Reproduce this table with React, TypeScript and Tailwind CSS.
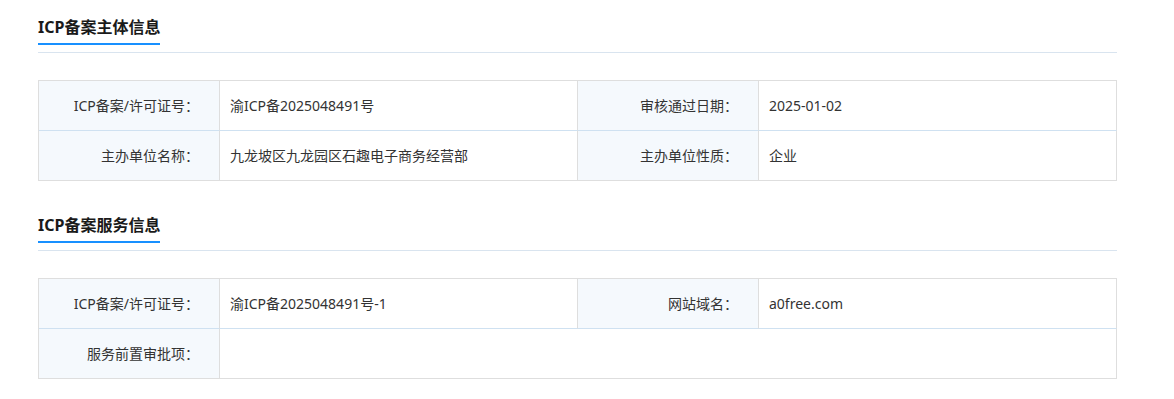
const font = { fontFamily: '"Noto Sans", "Noto Sans CJK SC", sans-serif' };

type Row = [string, string, string?, string?];

function SectionTitle({ title }: { title: string }) {
  return (
    <div className="flex border-b border-[#d9e4ef] pb-[7px]">
      <span className="border-b-2 border-[#1890ff] pb-[5px] text-[16px] leading-[22px] font-bold text-[#1a1a1a]">
        {title}
      </span>
    </div>
  );
}

function InfoTable({ rows }: { rows: Row[] }) {
  return (
    <div className="grid grid-cols-[181px_358px_181px_1fr] border-l border-t border-[#dedede] text-[14px] text-[#333]">
      {rows.map((r, i) => {
        const last = i === rows.length - 1;
        const rowBorder = last ? 'border-b-[#dedede]' : 'border-b-[#cfe1f1]';
        return r[2] !== undefined ? (
          <div key={i} className="contents">
            <div className={`flex h-[50px] items-center justify-end border-r border-b border-r-[#dedede] bg-[#f5f9fd] pr-[20px] ${rowBorder}`}>{r[0]}</div>
            <div className={`flex h-[50px] items-center border-r border-b border-r-[#dedede] pl-[10px] ${rowBorder}`}>{r[1]}</div>
            <div className={`flex h-[50px] items-center justify-end border-r border-b border-r-[#dedede] bg-[#f5f9fd] pr-[20px] ${rowBorder}`}>{r[2]}</div>
            <div className={`flex h-[50px] items-center border-r border-b border-r-[#dedede] pl-[10px] ${rowBorder}`}>{r[3]}</div>
          </div>
        ) : (
          <div key={i} className="contents">
            <div className={`flex h-[50px] items-center justify-end border-r border-b border-r-[#dedede] bg-[#f5f9fd] pr-[20px] ${rowBorder}`}>{r[0]}</div>
            <div className={`col-span-3 flex h-[50px] items-center border-r border-b border-r-[#dedede] pl-[10px] ${rowBorder}`}>{r[1]}</div>
          </div>
        );
      })}
    </div>
  );
}

export default function App() {
  return (
    <div className="min-h-[399px] w-[1174px] bg-white pl-[38px] pr-[57px] pt-[16px]" style={font}>
      <SectionTitle title="ICP备案主体信息" />
      <div className="mt-[27px]">
        <InfoTable
          rows={[
            ['ICP备案/许可证号：', '渝ICP备2025048491号', '审核通过日期：', '2025-01-02'],
            ['主办单位名称：', '九龙坡区九龙园区石趣电子商务经营部', '主办单位性质：', '企业'],
          ]}
        />
      </div>
      <div className="mt-[33px]">
        <SectionTitle title="ICP备案服务信息" />
      </div>
      <div className="mt-[27px]">
        <InfoTable
          rows={[
            ['ICP备案/许可证号：', '渝ICP备2025048491号-1', '网站域名：', 'a0free.com'],
            ['服务前置审批项：', ''],
          ]}
        />
      </div>
    </div>
  );
}
